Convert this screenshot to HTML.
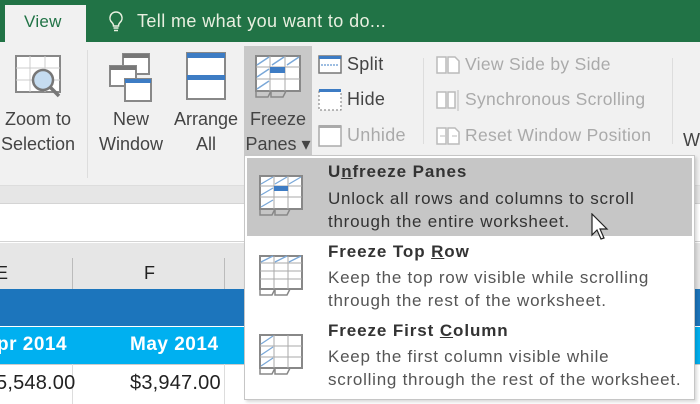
<!DOCTYPE html>
<html><head><style>
*{margin:0;padding:0;box-sizing:border-box}
body{width:700px;height:404px;overflow:hidden;position:relative;font-family:"Liberation Sans",sans-serif;background:#fff}
.a{position:absolute}
.t{font-size:17px;letter-spacing:0.3px;color:#444;white-space:nowrap}
.g{color:#aaa}
.m{font-size:17px;letter-spacing:0.75px;white-space:nowrap;color:#555}
.mb{font-weight:bold;color:#333;font-size:17px;letter-spacing:0.9px;white-space:nowrap}
</style></head><body>
<div class="a" style="left:0;top:0;width:700px;height:42px;background:#217346"></div>
<div class="a" style="left:5px;top:5px;width:81px;height:38px;background:#f1f1f1"></div>
<div class="a t" style="left:24px;top:12px;color:#217346;font-size:17px">View</div>
<svg class="a" style="left:108px;top:10px" width="16" height="22"><path d="M8 2a6 6 0 0 0-4 10.5c1 1 1.5 2 1.5 3.5h5c0-1.5.5-2.5 1.5-3.5A6 6 0 0 0 8 2zM5.5 18h5M6 20.5h4" fill="none" stroke="#e8f0e0" stroke-width="1.5"/></svg>
<div class="a t" style="left:137px;top:11px;color:#e8efe0;font-size:18px;letter-spacing:0.4px">Tell me what you want to do...</div>
<div class="a" style="left:0;top:42px;width:700px;height:143px;background:#f1f1f1"></div>
<div class="a" style="left:0;top:185px;width:700px;height:18px;background:#e6e6e6;border-top:1px solid #ddd"></div>
<div class="a" style="left:0;top:203px;width:700px;height:39px;background:#fff;border-top:1px solid #d4d4d4;border-bottom:1px solid #d4d4d4"></div>
<div class="a" style="left:0;top:243px;width:700px;height:46px;background:#e6e6e6"></div>
<div class="a" style="left:72px;top:258px;width:1px;height:31px;background:#bbb"></div>
<div class="a" style="left:224px;top:258px;width:1px;height:31px;background:#bbb"></div>
<div class="a t" style="left:-4px;top:263px;color:#222;font-size:18px">E</div>
<div class="a t" style="left:144px;top:263px;color:#222;font-size:18px">F</div>
<div class="a" style="left:0;top:289px;width:700px;height:37px;background:#1c75bc"></div>
<div class="a" style="left:0;top:327px;width:700px;height:37px;background:#00b0f0"></div>
<div class="a" style="left:0;top:364px;width:700px;height:40px;background:#fff;border-top:1px solid #ccc"></div>
<div class="a" style="left:72px;top:364px;width:1px;height:40px;background:#ddd"></div>
<div class="a" style="left:224px;top:364px;width:1px;height:40px;background:#ddd"></div>
<div class="a" style="left:-3px;top:334px;color:#fff;font-weight:bold;font-size:19px;letter-spacing:0.5px">pr 2014</div>
<div class="a" style="left:130px;top:334px;color:#fff;font-weight:bold;font-size:19px;letter-spacing:0.5px">May 2014</div>
<div class="a t" style="left:-4px;top:372px;color:#222;font-size:20px;letter-spacing:0.2px">5,548.00</div>
<div class="a t" style="left:130px;top:372px;color:#222;font-size:20px;letter-spacing:0.2px">$3,947.00</div>
<!-- ribbon -->
<div class="a" style="left:87px;top:50px;width:1px;height:128px;background:#ddd"></div>
<div class="a" style="left:423px;top:58px;width:1px;height:86px;background:#ddd"></div>
<div class="a" style="left:672px;top:58px;width:1px;height:86px;background:#ddd"></div>
<svg class="a" style="left:15px;top:55px" width="48" height="46"><rect x="1" y="1" width="44" height="36" fill="#fff" stroke="#888" stroke-width="2"/><path d="M1 13h44M1 25h44M15 1v36M30 1v36" stroke="#ccc"/><circle cx="28" cy="25" r="10" fill="#c5dcf0" stroke="#777" stroke-width="2.5"/><path d="M35 32l9 9" stroke="#777" stroke-width="3.5"/></svg>
<div class="a t" style="left:0px;top:107px;text-align:center;width:76px;line-height:25px;font-size:18px;letter-spacing:0">Zoom to<br>Selection</div>
<svg class="a" style="left:108px;top:52px" width="46" height="50"><rect x="15" y="2" width="26" height="20" fill="#fff" stroke="#888" stroke-width="2"/><rect x="15" y="2" width="26" height="4" fill="#777"/><rect x="2" y="14" width="26" height="20" fill="#fff" stroke="#888" stroke-width="2"/><rect x="2" y="14" width="26" height="4" fill="#777"/><rect x="17" y="27" width="26" height="22" fill="#fff" stroke="#888" stroke-width="2"/><rect x="17" y="27" width="26" height="4" fill="#3d7cc4"/></svg>
<div class="a t" style="left:93px;top:107px;text-align:center;width:76px;line-height:25px;font-size:18px;letter-spacing:0">New<br>Window</div>
<svg class="a" style="left:186px;top:52px" width="40" height="48"><rect x="1" y="1" width="38" height="46" fill="#fff" stroke="#888" stroke-width="2"/><rect x="1" y="1" width="38" height="5" fill="#3d7cc4"/><rect x="1" y="23" width="38" height="5" fill="#3d7cc4"/></svg>
<div class="a t" style="left:168px;top:107px;text-align:center;width:76px;line-height:25px;font-size:18px;letter-spacing:0">Arrange<br>All</div>
<div class="a" style="left:244px;top:46px;width:68px;height:110px;background:#c8c8c8"></div>
<svg class="a" style="left:255px;top:55px" width="46" height="44"><rect x="1" y="1" width="44" height="35" fill="#fff" stroke="#888" stroke-width="2"/><path d="M1 12h44M1 24h44M15 1v35M30 1v35" stroke="#aaa"/><rect x="15" y="12" width="15" height="6" fill="#3d7cc4"/><path d="M2 10l12-8M17 10l12-8M32 10l12-8M2 22l12-8M2 34l12-8" stroke="#7aa8d8" stroke-width="1.5"/><path d="M1 36v6h12l3-6M16 36v6h12l3-6" fill="none" stroke="#888" stroke-width="1.5"/></svg>
<div class="a t" style="left:240px;top:107px;text-align:center;width:76px;line-height:25px;font-size:18px;letter-spacing:0">Freeze<br>Panes ▾</div>
<svg class="a" style="left:318px;top:55px" width="24" height="20"><rect x="1" y="1" width="22" height="17" fill="#fff" stroke="#777" stroke-width="1.5"/><rect x="1" y="1" width="22" height="3" fill="#3d7cc4"/><path d="M3 10h18" stroke="#3d7cc4" stroke-dasharray="2 1"/></svg>
<div class="a t" style="left:347px;top:54px;font-size:18px">Split</div>
<svg class="a" style="left:318px;top:88px" width="24" height="24"><rect x="1" y="3" width="22" height="19" fill="#fff" stroke="#777" stroke-dasharray="2 2"/><rect x="1" y="1" width="22" height="3" fill="#3d7cc4"/></svg>
<div class="a t" style="left:347px;top:89px;font-size:18px">Hide</div>
<svg class="a" style="left:318px;top:124px" width="24" height="24"><rect x="1" y="2" width="22" height="20" fill="#fff" stroke="#aaa" stroke-width="1.5"/><rect x="1" y="1" width="22" height="3" fill="#aaa"/></svg>
<div class="a t g" style="left:347px;top:125px;font-size:18px">Unhide</div>
<svg class="a" style="left:435px;top:55px" width="26" height="20"><path d="M2 2h9v16H2zM13 2h7l4 4v12H13z" fill="#fff" stroke="#bbb" stroke-width="1.5"/></svg>
<div class="a t g" style="left:465px;top:54px;font-size:17.5px">View Side by Side</div>
<svg class="a" style="left:435px;top:89px" width="26" height="24"><path d="M2 3h9v16H2zM13 3h7v16h-7z" fill="#fff" stroke="#bbb" stroke-width="1.5"/><path d="M23 1v21" stroke="#bbb"/></svg>
<div class="a t g" style="left:465px;top:89px;font-size:17.5px">Synchronous Scrolling</div>
<svg class="a" style="left:435px;top:126px" width="26" height="20"><path d="M2 2h9v16H2zM13 2h7l4 4v12H13z" fill="#fff" stroke="#bbb" stroke-width="1.5"/><path d="M5 10h5M17 10h5" stroke="#bbb"/></svg>
<div class="a t g" style="left:465px;top:125px;font-size:17.5px">Reset Window Position</div>
<div class="a t" style="left:683px;top:130px;font-size:18px">W</div>
<!-- menu -->
<div class="a" style="left:244px;top:155px;width:451px;height:245px;background:#fff;border:1px solid #c6c6c6;box-shadow:2px 2px 3px rgba(0,0,0,.15)"></div>
<div class="a" style="left:247px;top:158px;width:445px;height:78px;background:#c6c6c6"></div>
<svg class="a" style="left:259px;top:175px" width="46" height="42"><rect x="1" y="1" width="42" height="33" fill="#fff" stroke="#888" stroke-width="2"/><path d="M1 11h42M1 22h42M15 1v33M29 1v33" stroke="#aaa"/><rect x="15" y="11" width="14" height="5" fill="#3d7cc4"/><path d="M2 9l12-7M16 9l12-7M30 9l12-7M2 20l12-7M2 32l12-7" stroke="#7aa8d8" stroke-width="1.3"/><path d="M1 34v6h12l3-6M16 34v6h12l3-6" fill="none" stroke="#888" stroke-width="1.5"/></svg>
<svg class="a" style="left:259px;top:255px" width="46" height="42"><rect x="1" y="1" width="42" height="33" fill="#fff" stroke="#888" stroke-width="2"/><path d="M1 8h42M1 16h42M1 24h42M15 1v33M29 1v33" stroke="#aaa"/><path d="M2 7l12-6M16 7l12-6M30 7l12-6" stroke="#7aa8d8" stroke-width="1.3"/><path d="M1 34v6h12l3-6M16 34v6h12l3-6" fill="none" stroke="#888" stroke-width="1.5"/></svg>
<svg class="a" style="left:259px;top:334px" width="46" height="42"><rect x="1" y="1" width="42" height="33" fill="#fff" stroke="#888" stroke-width="2"/><path d="M1 12h42M1 23h42M15 1v33M29 1v33" stroke="#aaa"/><path d="M2 10l12-8M2 21l12-8M2 32l12-8" stroke="#7aa8d8" stroke-width="1.3"/><path d="M1 34v6h12l3-6M16 34v6h12l3-6" fill="none" stroke="#888" stroke-width="1.5"/></svg>
<div class="a mb" style="left:328px;top:162px">U<u>n</u>freeze Panes</div>
<div class="a m" style="left:328px;top:187px;line-height:23px;color:#333">Unlock all rows and columns to scroll<br>through the entire worksheet.</div>
<div class="a mb" style="left:328px;top:242px">Freeze Top <u>R</u>ow</div>
<div class="a m" style="left:328px;top:266px;line-height:23px">Keep the top row visible while scrolling<br>through the rest of the worksheet.</div>
<div class="a mb" style="left:328px;top:321px">Freeze First <u>C</u>olumn</div>
<div class="a m" style="left:328px;top:345px;line-height:23px">Keep the first column visible while<br>scrolling through the rest of the worksheet.</div>
<svg class="a" style="left:590px;top:213px" width="20" height="30"><path d="M2 1v21l5-5 4 9 3-1-4-9h7z" fill="#fff" stroke="#222" stroke-width="1.2"/></svg>
</body></html>
